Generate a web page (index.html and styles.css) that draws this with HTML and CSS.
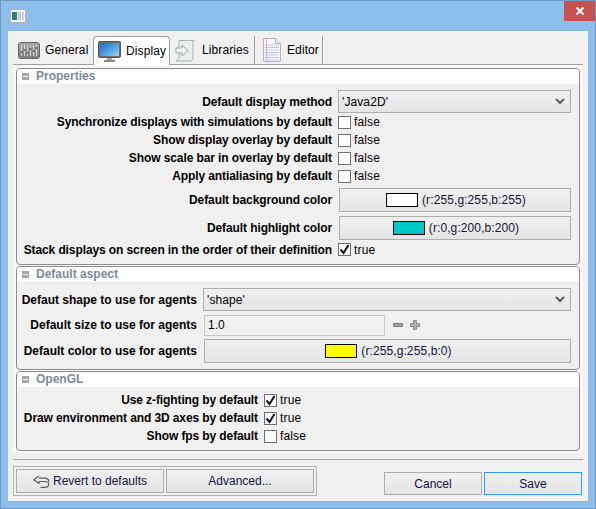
FILE: index.html
```html
<!DOCTYPE html>
<html>
<head>
    <title>Preferences</title>
    <link rel="stylesheet" href="styles.css">
</head>
<body>
<div class="window">
    <div class="titlebar">
        <svg class="app-icon" width="16" height="14" viewBox="0 0 16 14">
            <rect x="0.5" y="0.5" width="15" height="13" fill="#f0f0f0" stroke="#b5b5b5"/>
            <rect x="2" y="3" width="5" height="8" fill="#2d7f78"/>
            <rect x="8" y="3" width="3" height="8" fill="#c4d2dc"/>
            <rect x="12" y="3" width="2" height="8" fill="#d0d0d0"/>
        </svg>
        <div class="close">
            <svg width="10" height="10" viewBox="0 0 10 10"><path d="M1.5 1.5l7 7M8.5 1.5l-7 7" stroke="#fff" stroke-width="2"/></svg>
        </div>
    </div>

    <div class="content">
        <!-- Tabs -->
        <div class="tabs">
            <div class="tab tab-general">
                <svg width="22" height="17" viewBox="0 0 22 17">
                    <defs><linearGradient id="rack" x1="0" y1="0" x2="0" y2="1"><stop offset="0" stop-color="#a8a8a8"/><stop offset="1" stop-color="#7c7c7c"/></linearGradient></defs>
                    <rect x="0.5" y="0.5" width="21" height="16" rx="2.5" fill="url(#rack)" stroke="#666"/>
                    <path d="M3.500 3v11M6.500 3v11M9.500 3v11M12.500 3v11M15.500 3v11M18.500 3v11" stroke="#d4d4d4"/>
                    <path d="M2.500 10h2M5.500 8h2M8.500 11h2M11.500 7h2M14.500 9h2M17.500 6h2" stroke="#555" stroke-width="1.500"/>
                </svg>
                <span>General</span>
            </div>
            <div class="tab tab-display active">
                <svg width="23" height="21" viewBox="0 0 23 21">
                    <path d="M9 16h5v3H9z" fill="#a5a5a5"/>
                    <path d="M6 19h11v2H6z" fill="#8a8a8a"/>
                    <rect x="0.500" y="0.500" width="22" height="16" rx="1" fill="#6a6d70" stroke="#55585a"/>
                    <defs><linearGradient id="scr" x1="0" y1="0" x2="1" y2="1"><stop offset="0" stop-color="#1c6cc4"/><stop offset="0.6" stop-color="#57a8e4"/><stop offset="1" stop-color="#a9d6f2"/></linearGradient></defs>
                    <rect x="2" y="2" width="19" height="13" fill="url(#scr)"/>
                </svg>
                <span>Display</span>
            </div>
            <div class="tab tab-libraries">
                <svg width="20" height="23" viewBox="0 0 20 23">
                    <path d="M4 1.500h15c-1.500 2-1.500 4-1 6v11c0 2-1 3.500-3 3.500H1c2-1 3-2 3-4z" fill="#e6efec" stroke="#a9b3ae"/>
                    <path d="M1 9h6V6l6 5.500-6 5.500v-3H1z" fill="#f5f8f7" stroke="#97a49e"/>
                </svg>
                <span>Libraries</span>
            </div>
            <div class="tab tab-editor">
                <svg width="18" height="24" viewBox="0 0 18 24">
                    <path d="M0.500 0.500h12l5 5v18H0.500z" fill="#fbfbff" stroke="#b4b4bc"/>
                    <path d="M2 7h14M2 9.500h14M2 12h14M2 14.500h14M2 17h14M2 19.500h14M2 22h14" stroke="#b9c6ec"/>
                    <path d="M3.500 1v22" stroke="#eab4b4"/>
                    <path d="M12.500 0.500v5h5" fill="#e8e8ee" stroke="#b4b4bc"/>
                </svg>
                <span>Editor</span>
            </div>
        </div>

        <div class="pane">
            <div class="section">
                <div class="section-head"><i class="minus"></i>Properties</div>
                <div class="form form-properties">
                    <label>Default display method</label>
                    <div class="combo">'Java2D'<svg width="10" height="7" viewBox="0 0 10 7"><path d="M1 1l4 4 4-4" fill="none" stroke="#5a5a5a" stroke-width="2"/></svg></div>

                    <label>Synchronize displays with simulations by default</label>
                    <div class="check"><i class="box"></i>false</div>
                    <label>Show display overlay by default</label>
                    <div class="check"><i class="box"></i>false</div>
                    <label>Show scale bar in overlay by default</label>
                    <div class="check"><i class="box"></i>false</div>
                    <label>Apply antialiasing by default</label>
                    <div class="check"><i class="box"></i>false</div>

                    <label class="gap-top">Default background color</label>
                    <div class="color gap-top"><i class="swatch" style="background:#ffffff"></i>(r:255,g:255,b:255)</div>
                    <label class="gap-mid">Default highlight color</label>
                    <div class="color gap-mid"><i class="swatch" style="background:#00c8c8"></i>(r:0,g:200,b:200)</div>

                    <label>Stack displays on screen in the order of their definition</label>
                    <div class="check"><i class="box"><svg width="11" height="11" viewBox="0 0 11 11"><path d="M1.500 5.500l3 3.500 5-8" fill="none" stroke="#111" stroke-width="2"/></svg></i>true</div>
                </div>
            </div>

            <div class="section">
                <div class="section-head"><i class="minus"></i>Default aspect</div>
                <div class="form form-aspect">
                    <label>Defaut shape to use for agents</label>
                    <div class="combo">'shape'<svg width="10" height="7" viewBox="0 0 10 7"><path d="M1 1l4 4 4-4" fill="none" stroke="#5a5a5a" stroke-width="2"/></svg></div>

                    <label>Default size to use for agents</label>
                    <div class="size-row">
                        <div class="field">1.0</div>
                        <svg width="27" height="10" viewBox="0 0 27 10">
                            <path d="M0.500 3.500h9v3h-9z" fill="#a0a0a0" stroke="#808080"/>
                            <path d="M20.500 0.500h3v3h3v3h-3v3h-3v-3h-3v-3h3z" fill="#b0b0b0" stroke="#8a8a8a"/>
                        </svg>
                    </div>

                    <label>Default color to use for agents</label>
                    <div class="color"><i class="swatch" style="background:#ffff00"></i>(r:255,g:255,b:0)</div>
                </div>
            </div>

            <div class="section">
                <div class="section-head"><i class="minus"></i>OpenGL</div>
                <div class="form form-opengl">
                    <label>Use z-fighting by default</label>
                    <div class="check"><i class="box"><svg width="11" height="11" viewBox="0 0 11 11"><path d="M1.500 5.500l3 3.500 5-8" fill="none" stroke="#111" stroke-width="2"/></svg></i>true</div>
                    <label>Draw environment and 3D axes by default</label>
                    <div class="check"><i class="box"><svg width="11" height="11" viewBox="0 0 11 11"><path d="M1.500 5.500l3 3.500 5-8" fill="none" stroke="#111" stroke-width="2"/></svg></i>true</div>
                    <label>Show fps by default</label>
                    <div class="check"><i class="box"></i>false</div>
                </div>
            </div>
        </div>

        <div class="separator"></div>

        <div class="footer">
            <div class="btn-group">
                <div class="btn">
                    <svg width="17" height="13" viewBox="0 0 17 13">
                        <path d="M6 1L0.800 4.800 6 8.500V6.500h5.500c2.500 0 4.300 .7 4.300 2.500S14 12.300 11.500 12.300H7.500" fill="none" stroke="#5c5c5c" stroke-width="1.200" stroke-linejoin="round"/>
                        <path d="M6 3.200h5.500c2.500 0 4.300 1 4.300 3.500" fill="none" stroke="#5c5c5c" stroke-width="1.200"/>
                    </svg>
                    Revert to defaults
                </div>
                <div class="btn">Advanced...</div>
            </div>
            <div class="actions">
                <div class="btn">Cancel</div>
                <div class="btn btn-default">Save</div>
            </div>
        </div>
    </div>
</div>
</body>
</html>
```

FILE: styles.css
```css
html, body { margin: 0; padding: 0; }
body { font-family: "Liberation Sans", Arial, sans-serif; font-size: 12px; color: #000; }
i { display: block; }

.window {
    width: 596px;
    height: 509px;
    box-sizing: border-box;
    background-color: #8dbdeb;
    border: 1px solid #6f96bd;
    padding: 0 7px 7px;
    overflow: hidden;
}
.titlebar { height: 30px; position: relative; }
.app-icon { position: absolute; left: 2px; top: 8px; }
.close {
    position: absolute;
    right: -7px;
    top: 0;
    width: 31px;
    height: 20px;
    background-color: #c75050;
    display: flex;
    align-items: center;
    justify-content: center;
}

.content { height: 470px; background-color: #f0f0f0; }

/* Tabs */
.tabs { display: flex; height: 33px; padding: 5px 5px 0; box-sizing: border-box; letter-spacing: 0.1px; }
.tab { display: flex; align-items: center; height: 28px; box-sizing: border-box; }
.tab-general { width: 80px; padding-left: 5px; gap: 5px; }
.tab-display { width: 77px; padding-left: 4px; gap: 5px; }
.tab-libraries { width: 85px; padding-left: 5px; gap: 7px; border-right: 1px solid #a0a0a0; }
.tab-editor { width: 68px; padding-left: 8px; gap: 6px; border-right: 1px solid #a0a0a0; }
.tab.active {
    background-color: #fff;
    border: 1px solid #a0a0a0;
    border-bottom: none;
    border-radius: 4px 4px 0 0;
    height: 29px;
    position: relative;
    z-index: 1;
}

.pane {
    margin: 0 5px;
    height: 389px;
    box-sizing: border-box;
    border-top: 1px solid #a0a0a0;
    background-color: #f9f9f9;
    padding: 3px 3px 0;
}

/* Sections */
.section {
    border: 1px solid #8c8c8c;
    border-radius: 4px;
    background-color: #f0f0f0;
    margin-bottom: 1px;
}
.section-head {
    height: 15px;
    box-sizing: border-box;
    padding: 0 0 2px 5px;
    background-color: #fff;
    border-radius: 3px 3px 0 0;
    color: #7f8a99;
    font-weight: bold;
    display: flex;
    align-items: center;
    gap: 7px;
}
.minus {
    width: 7px;
    height: 7px;
    margin-top: 2px;
    background-color: #a8a8a8;
    position: relative;
}
.minus::after { content: ""; position: absolute; left: 1px; right: 1px; top: 3px; height: 1px; background-color: #eee; }

.form { display: grid; padding: 6px 8px 5px 0; column-gap: 6px; }
.form label { font-weight: bold; text-align: right; align-self: center; white-space: nowrap; letter-spacing: -0.1px; }
.form-properties { grid-template-columns: 315px 1fr; grid-template-rows: 23px repeat(4, 18px) 27px 28px 19px; }
.form-aspect { grid-template-columns: 180px 1fr; grid-template-rows: 23px 22px 24px; row-gap: 3px; padding-bottom: 6px; }
.form-aspect label { letter-spacing: 0; }
.form-opengl { grid-template-columns: 241px 1fr; grid-template-rows: repeat(3, 18px); padding-top: 4px; }

.gap-top { margin-top: 3px; }
.gap-mid { margin-top: 4px; }

/* Controls */
.combo {
    display: flex;
    align-items: center;
    justify-content: space-between;
    box-sizing: border-box;
    border: 1px solid #adadad;
    background: linear-gradient(#f0f0f0, #e5e5e5);
    padding: 0 5px 0 3px;
    letter-spacing: 0.1px;
}
.check { display: flex; align-items: center; gap: 3px; letter-spacing: 0.15px; }
.box {
    width: 11px;
    height: 11px;
    border: 1px solid #707070;
    background-color: #fff;
    display: flex;
    align-items: center;
    justify-content: center;
}
.color {
    display: flex;
    align-items: center;
    justify-content: center;
    gap: 4px;
    box-sizing: border-box;
    height: 24px;
    margin-left: 1px;
    padding-left: 2px;
    border: 1px solid #adadad;
    background: linear-gradient(#f0f0f0, #e5e5e5);
    color: #14143c;
    letter-spacing: 0.1px;
}
.swatch { width: 30px; height: 12px; border: 1px solid #000; }

.size-row { display: flex; align-items: center; gap: 8px; margin-left: 1px; }
.field {
    width: 181px;
    height: 21px;
    box-sizing: border-box;
    border: 1px solid #c8c8c8;
    background-color: #f0f0f0;
    display: flex;
    align-items: center;
    padding-left: 3px;
}

/* Footer */
.separator { height: 1px; background-color: #a8a8a8; margin: 6px 5px 0; }
.footer { display: flex; justify-content: space-between; padding: 6px 5px 0; align-items: flex-start; }
.btn-group {
    display: flex;
    gap: 2px;
    padding: 2px;
    border: 1px solid #b4b4b4;
    width: 304px;
    box-sizing: border-box;
}
.btn {
    height: 24px;
    box-sizing: border-box;
    flex: 1;
    display: flex;
    align-items: center;
    justify-content: center;
    gap: 3px;
    border: 1px solid #adadad;
    background: linear-gradient(#f0f0f0, #e5e5e5);
    color: #14143c;
}
.actions { display: flex; gap: 2px; width: 198px; margin: 6px 1px 0 0; }
.actions .btn { height: 23px; }
.btn-default { border-color: #3399ff; }
```
